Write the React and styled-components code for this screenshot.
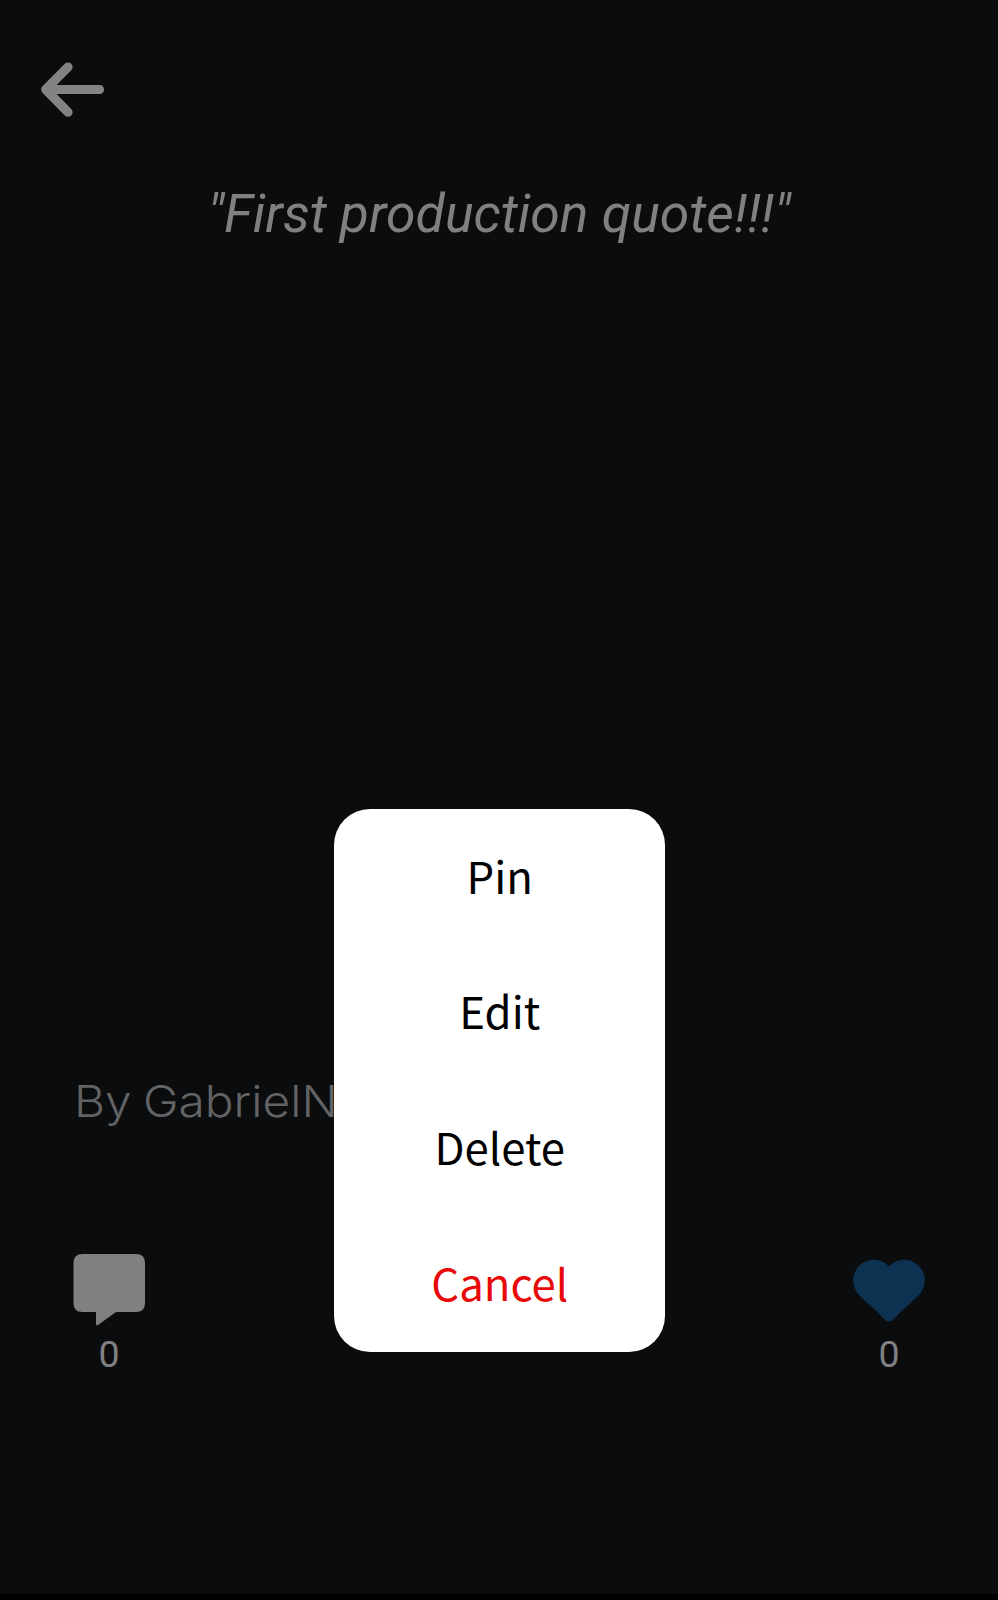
import React from "react";
import styled, { createGlobalStyle } from "styled-components";

const GlobalStyle = createGlobalStyle`
  * { box-sizing: border-box; }
  body { margin: 0; background: #0b0c0e; }
`;

const Screen = styled.main`
  position: relative;
  display: flex;
  flex-direction: column;
  width: 998px;
  height: 1600px;
  overflow: hidden;
  background: #0b0c0e;
  border-bottom: 6px solid #000;
  font-family: Roboto, sans-serif;
  color: #808082;
`;

const Header = styled.header`
  display: flex;
  height: 180px;
  padding: 60px 0 0 39px;
`;

const BackButton = styled.button`
  display: block;
  width: 68px;
  height: 60px;
  padding: 0;
  border: 0;
  background: none;
  color: #838383;
`;

const Icon = styled.svg`
  display: block;
  width: ${(p) => p.$width}px;
  height: ${(p) => p.$height}px;
`;

const Quote = styled.blockquote`
  flex: 1;
  margin: 0;
  padding-top: 2px;
  text-align: center;
  font-size: 53.5px;
  font-style: italic;
  line-height: 64px;
  white-space: nowrap;
`;

const Author = styled.p`
  margin: 0;
  padding-left: 74px;
  height: 171px;
  font-family: Inter, sans-serif;
  font-size: 43.5px;
  font-weight: 300;
  line-height: 58px;
  word-spacing: -2px;
  white-space: nowrap;
  color: #626364;
`;

const WideName = styled.span`
  display: inline-block;
  transform: scaleX(1.1);
  transform-origin: left center;
`;

const Actions = styled.footer`
  display: flex;
  justify-content: space-between;
  height: 351px;
  padding: 9px 73px 0;
`;

const Action = styled.div`
  display: flex;
  flex-direction: column;
  align-items: center;
  width: 72px;
`;

const Count = styled.span`
  margin-top: 3px;
  font-size: 37.5px;
  line-height: 46px;
`;

const Overlay = styled.div`
  position: absolute;
  top: 809px;
  left: 333.5px;
`;

const Menu = styled.div`
  display: grid;
  grid-template-rows: repeat(4, 1fr);
  width: 331.5px;
  height: 542.5px;
  border-radius: 36px;
  background: #fff;
`;

const MenuItem = styled.button`
  padding: 0 0 4px 1px;
  border: 0;
  background: none;
  font-family: "Noto Sans CJK SC", sans-serif;
  font-size: 43.7px;
  line-height: 66px;
  text-align: center;
  color: ${(p) => (p.$danger ? "#e90909" : "#000")};
`;

const items = [
  { label: "Pin" },
  { label: "Edit" },
  { label: "Delete" },
  { label: "Cancel", danger: true },
];

export default function App() {
  return (
    <>
      <GlobalStyle />
      <Screen>
        <Header>
          <BackButton aria-label="Back">
            <Icon $width={68} $height={60} viewBox="0 0 68 60">
              <path
                d="M29 7L6.700 29.500L29 52.200M9 29.500H60.500"
                fill="none"
                stroke="currentColor"
                strokeWidth="9.200"
                strokeLinecap="round"
                strokeLinejoin="round"
              />
            </Icon>
          </BackButton>
        </Header>
        <Quote>"First production quote!!!"</Quote>
        <Author>
          <WideName>By GabrielN</WideName>
        </Author>
        <Actions>
          <Action>
            <Icon $width={72} $height={76} viewBox="0 0 72 76">
              <path
                d="M9.500 2H63Q72 2 72 11V51Q72 60 63 60H43L25 73Q23 74 23 72V60H9.500Q0.500 60 0.500 51V11Q0.500 2 9.500 2Z"
                fill="#808080"
              />
            </Icon>
            <Count>0</Count>
          </Action>
          <Action>
            <Icon $width={72} $height={76} viewBox="0 0 72 76">
              <path
                d="M36 14.500C29 6.500 15 5 6.500 13.500C-2 22-2 34.500 6.500 43.500C13 50 24 59 31 67Q36 72 41 67C48 59 59 50 65.500 43.500C74 34.500 74 22 65.500 13.500C57 5 43 6.500 36 14.500Z"
                fill="#0d3150"
              />
            </Icon>
            <Count>0</Count>
          </Action>
        </Actions>
        <Overlay>
          <Menu>
            {items.map((item) => (
              <MenuItem key={item.label} $danger={item.danger}>
                {item.label}
              </MenuItem>
            ))}
          </Menu>
        </Overlay>
      </Screen>
    </>
  );
}
